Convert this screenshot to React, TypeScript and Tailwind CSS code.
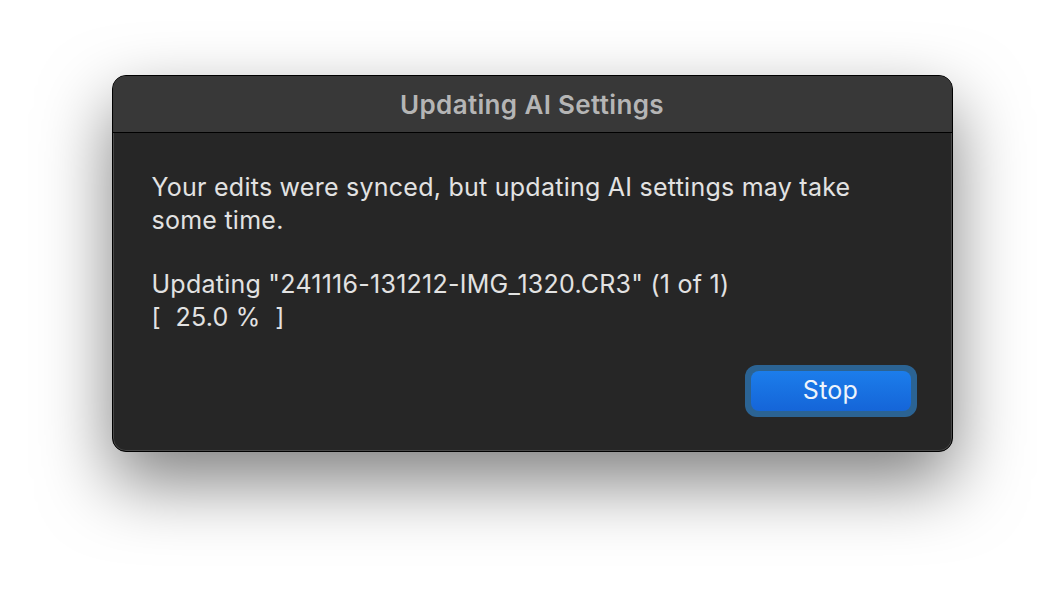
export default function App() {
  return (
    <div
      className="w-full h-[600px] bg-white flex justify-center pt-[75px]"
      style={{ fontFamily: "Inter, 'Liberation Sans', sans-serif" }}
    >
      <div className="w-[841px] h-[377px] rounded-[14px] border border-black bg-[#262626] overflow-hidden flex flex-col shadow-[0_30px_70px_rgba(0,0,0,0.5),inset_0_0_0_1px_rgba(255,255,255,0.16)]">
        {/* Title bar */}
        <div className="h-[57px] shrink-0 bg-[#383838] border-b border-black flex items-center justify-center">
          <span className="text-[26px] font-semibold text-[#b5b5b5] tracking-[0.35px]">
            Updating AI Settings
          </span>
        </div>

        {/* Body */}
        <div className="flex-1 flex flex-col pl-[39px] pr-[35px] pt-[38px]">
          <div className="text-[25px] leading-[33px] text-[#e2e2e2] tracking-[0.25px]">
            <p>
              Your edits were synced, but updating AI settings may take
              <br />
              some time.
            </p>
            <p className="mt-[31px]">
              Updating "241116-131212-IMG_1320.CR3" (1 of 1)
              <br />
              [&nbsp;&nbsp;25.0 %&nbsp;&nbsp;]
            </p>
          </div>

          <div className="flex justify-end mt-[31px]">
            <div className="rounded-[12px] bg-[#2c6aa0]/90 p-[6px]">
              <button className="w-[160px] h-[40px] rounded-[8px] bg-gradient-to-b from-[#1c7deb] to-[#1565d8] text-[25px] tracking-[0.25px] text-[#eef4fb] flex items-center justify-center">
                Stop
              </button>
            </div>
          </div>
        </div>
      </div>
    </div>
  );
}
